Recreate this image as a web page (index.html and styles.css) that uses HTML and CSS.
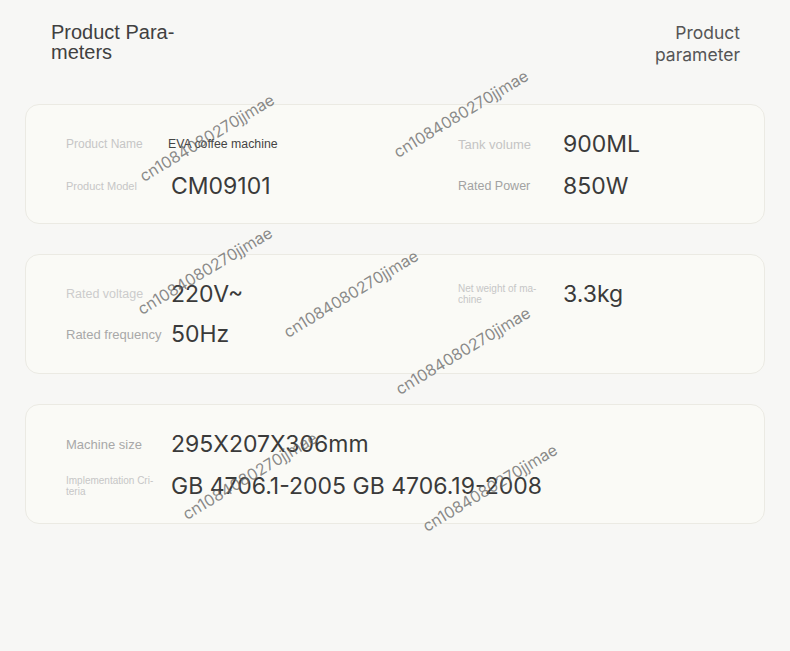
FILE: index.html
```html
<!DOCTYPE html>
<html lang="en">
<head>
<meta charset="utf-8">
<title>Product Parameters</title>
<link rel="stylesheet" href="styles.css">
</head>
<body>
<div class="page">
  <header class="head">
    <h1 class="title">Product Para-<br>meters</h1>
    <div class="subtitle">Product<br>parameter</div>
  </header>

  <section class="card c1">
    <div class="col">
      <div class="row"><span class="label l-name">Product Name</span><span class="value small">EVA coffee machine</span></div>
      <div class="row"><span class="label l-model">Product Model</span><span class="value">CM09101</span></div>
    </div>
    <div class="col">
      <div class="row"><span class="label l-tank">Tank volume</span><span class="value">900ML</span></div>
      <div class="row"><span class="label l-power">Rated Power</span><span class="value">850W</span></div>
    </div>
  </section>

  <section class="card c2">
    <div class="col">
      <div class="row"><span class="label l-volt">Rated voltage</span><span class="value">220V~</span></div>
      <div class="row"><span class="label l-freq">Rated frequency</span><span class="value">50Hz</span></div>
    </div>
    <div class="col">
      <div class="row"><span class="label tiny">Net weight of ma-<br>chine</span><span class="value">3.3kg</span></div>
    </div>
  </section>

  <section class="card single">
    <div class="col">
      <div class="row"><span class="label l-size">Machine size</span><span class="value">295X207X306mm</span></div>
      <div class="row"><span class="label tiny">Implementation Cri-<br>teria</span><span class="value">GB 4706.1-2005 GB 4706.19-2008</span></div>
    </div>
  </section>

  <div class="wm wm1">cn1084080270jjmae</div>
  <div class="wm wm2">cn1084080270jjmae</div>
  <div class="wm wm3">cn1084080270jjmae</div>
  <div class="wm wm4">cn1084080270jjmae</div>
  <div class="wm wm5">cn1084080270jjmae</div>
  <div class="wm wm6">cn1084080270jjmae</div>
  <div class="wm wm7">cn1084080270jjmae</div>
</div>
</body>
</html>
```

FILE: styles.css
```css
html, body {
  margin: 0;
  padding: 0;
  background: #f7f7f5;
}
.page {
  position: relative;
  width: 790px;
  height: 651px;
  overflow: hidden;
  box-sizing: border-box;
  padding: 22px 25px 0 25px;
  font-family: "Liberation Sans", Arial, sans-serif;
}
.head {
  display: flex;
  justify-content: space-between;
  align-items: flex-start;
  padding: 0 25px 0 26px;
}
.title {
  margin: 0;
  font-weight: normal;
  font-size: 20px;
  line-height: 20px;
  color: #404040;
}
.subtitle {
  font-family: Inter, "Open Sans", sans-serif;
  font-size: 17.5px;
  line-height: 22px;
  color: #555;
  text-align: right;
}
.card {
  margin-top: 38px;
  display: grid;
  grid-template-columns: 392px 1fr;
  padding: 22px 40px 20px 40px;
  background: #fafaf6;
  border: 1px solid #ebeae3;
  border-radius: 14px;
}
.card + .card { margin-top: 30px; }
.card.c2 { padding: 22px 40px 22px 40px; }
.card.c2 .col { gap: 6px; }
.card.single { grid-template-columns: 1fr; }
.col {
  display: flex;
  flex-direction: column;
  gap: 8px;
}
.row {
  display: flex;
  align-items: center;
  height: 34px;
}
.label {
  width: 105px;
  flex: none;
  font-size: 12px;
  color: #bdbdbd;
}
.l-name { font-size: 12px; color: #c6c6c6; }
.l-model { font-size: 11px; color: #c6c6c6; }
.l-tank { font-size: 13px; color: #c4c4c4; }
.l-power { font-size: 12.5px; color: #a2a2a2; }
.l-volt { font-size: 12.5px; color: #cccccc; }
.l-freq { font-size: 13px; color: #a8a8a8; }
.l-size { font-size: 13px; color: #a8a8a8; }
.tiny {
  font-size: 10px;
  line-height: 11px;
  color: #c6c6c6;
}
.value {
  font-family: Inter, "Open Sans", sans-serif;
  font-size: 23px;
  color: #3a3a3a;
  white-space: nowrap;
}
.value.small {
  font-family: "Liberation Sans", Arial, sans-serif;
  font-size: 12.3px;
  color: #444;
  margin-left: -3px;
}
.wm {
  position: absolute;
  font-family: Inter, "Open Sans", sans-serif;
  font-size: 16px;
  line-height: 16px;
  color: rgba(100, 100, 100, 0.75);
  white-space: nowrap;
  transform-origin: 0 100%;
  transform: rotate(-31deg);
  pointer-events: none;
}
.wm1 { left: 145px; top: 168px; }
.wm2 { left: 399px; top: 144px; }
.wm3 { left: 143px; top: 301px; }
.wm4 { left: 289px; top: 324px; }
.wm5 { left: 401px; top: 381px; }
.wm6 { left: 188px; top: 506px; }
.wm7 { left: 428px; top: 518px; }
```
